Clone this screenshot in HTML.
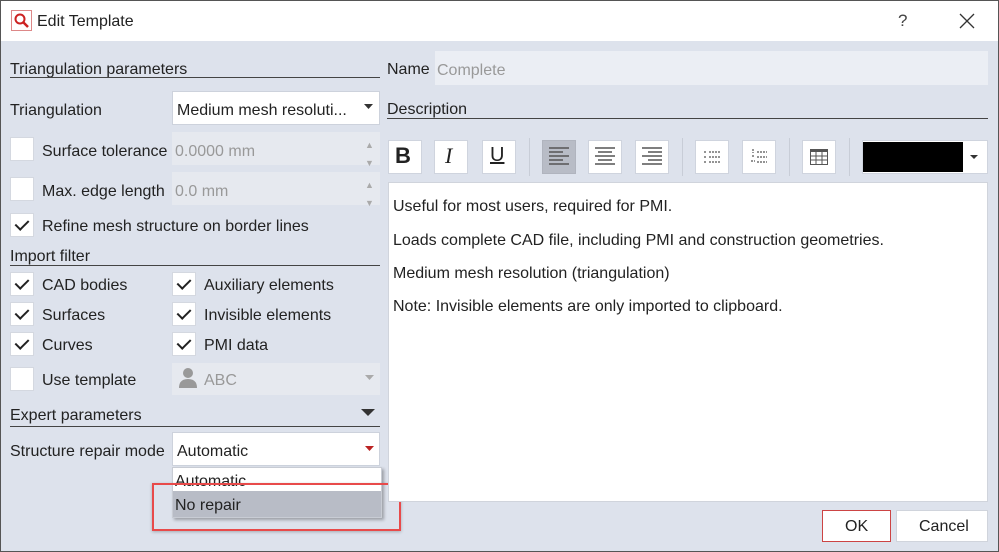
<!DOCTYPE html>
<html><head><style>
*{margin:0;padding:0;box-sizing:border-box}
body{width:999px;height:552px;overflow:hidden;background:#dde2ec;font-family:"Liberation Sans",sans-serif;font-size:16px;color:#222;position:relative}
.a{position:absolute}
.t{position:absolute;white-space:nowrap;line-height:18px;margin-top:2px}
.cb{position:absolute;width:24px;height:24px;background:#fff;border:1px solid #d4d8e0}
.ck::after{content:"";position:absolute;left:7px;top:3px;width:6px;height:11px;border:solid #222;border-width:0 2.5px 2.5px 0;transform:rotate(45deg)}
.box{position:absolute;background:#fff;border:1px solid #cdd2dc}
.dis{position:absolute;background:#e6e9ef}
.btn{position:absolute;top:140px;width:34px;height:34px;background:#fff;border:1px solid #cfd4de}
.sep{position:absolute;top:138px;width:1px;height:38px;background:#c8cdd7}
.ln{position:absolute;height:1px;background:#444}
</style></head><body>
<div class="a" style="left:0;top:0;width:999px;height:41px;background:#fff"></div>
<div class="a" style="left:0;top:0;width:999px;height:552px;border:1px solid #555;pointer-events:none;z-index:9"></div>
<div class="a" style="left:11px;top:10px;width:21px;height:21px;border:1px solid #d88"></div>
<svg class="a" style="left:13px;top:12px" width="17" height="17"><circle cx="7" cy="7" r="4.5" fill="none" stroke="#c22" stroke-width="2"/><line x1="10" y1="10" x2="15" y2="15" stroke="#c22" stroke-width="2.5"/></svg>
<div class="t" style="left:37px;top:11px;font-size:16px">Edit Template</div>
<div class="t" style="left:898px;top:10px;font-size:17px;color:#444">?</div>
<svg class="a" style="left:959px;top:13px" width="16" height="16"><path d="M1 1L15 15M15 1L1 15" stroke="#333" stroke-width="1.3"/></svg>

<div class="t" style="left:10px;top:59px">Triangulation parameters</div>
<div class="ln" style="left:10px;top:77px;width:370px"></div>
<div class="t" style="left:10px;top:100px">Triangulation</div>
<div class="box" style="left:172px;top:91px;width:208px;height:34px"></div>
<div class="t" style="left:177px;top:100px">Medium mesh resoluti...</div>
<svg class="a" style="left:364px;top:104px" width="9" height="6"><path d="M0 0H9L4.5 5z" fill="#333"/></svg>

<div class="cb" style="left:10px;top:137px"></div>
<div class="t" style="left:42px;top:141px">Surface tolerance</div>
<div class="dis" style="left:172px;top:132px;width:208px;height:33px"></div>
<div class="t" style="left:175px;top:141px;color:#999">0.0000 mm</div>
<div class="t" style="left:365px;top:134px;color:#aaa;font-size:9px">▲<br>▼</div>
<div class="cb" style="left:10px;top:177px"></div>
<div class="t" style="left:42px;top:181px">Max. edge length</div>
<div class="dis" style="left:172px;top:172px;width:208px;height:33px"></div>
<div class="t" style="left:175px;top:181px;color:#999">0.0 mm</div>
<div class="t" style="left:365px;top:174px;color:#aaa;font-size:9px">▲<br>▼</div>
<div class="cb ck" style="left:10px;top:213px"></div>
<div class="t" style="left:42px;top:216px">Refine mesh structure on border lines</div>

<div class="t" style="left:10px;top:246px">Import filter</div>
<div class="ln" style="left:10px;top:265px;width:370px"></div>
<div class="cb ck" style="left:10px;top:272px"></div><div class="t" style="left:42px;top:275px">CAD bodies</div>
<div class="cb ck" style="left:172px;top:272px"></div><div class="t" style="left:204px;top:275px">Auxiliary elements</div>
<div class="cb ck" style="left:10px;top:302px"></div><div class="t" style="left:42px;top:305px">Surfaces</div>
<div class="cb ck" style="left:172px;top:302px"></div><div class="t" style="left:204px;top:305px">Invisible elements</div>
<div class="cb ck" style="left:10px;top:332px"></div><div class="t" style="left:42px;top:335px">Curves</div>
<div class="cb ck" style="left:172px;top:332px"></div><div class="t" style="left:204px;top:335px">PMI data</div>
<div class="cb" style="left:10px;top:367px"></div><div class="t" style="left:42px;top:370px">Use template</div>
<div class="dis" style="left:172px;top:363px;width:208px;height:32px"></div>
<svg class="a" style="left:178px;top:367px" width="20" height="22"><circle cx="10" cy="6" r="5" fill="#999"/><path d="M1 21Q1 12 10 12Q19 12 19 21z" fill="#999"/></svg>
<div class="t" style="left:204px;top:370px;color:#999">ABC</div>
<svg class="a" style="left:365px;top:375px" width="9" height="6"><path d="M0 0H9L4.5 5z" fill="#aaa"/></svg>

<div class="t" style="left:10px;top:405px">Expert parameters</div>
<svg class="a" style="left:361px;top:409px" width="14" height="8"><path d="M0 0H14L7 7z" fill="#333"/></svg>
<div class="ln" style="left:10px;top:426px;width:370px"></div>
<div class="t" style="left:10px;top:441px">Structure repair mode</div>
<div class="box" style="left:172px;top:432px;width:208px;height:34px"></div>
<div class="t" style="left:177px;top:441px">Automatic</div>
<svg class="a" style="left:365px;top:446px" width="9" height="6"><path d="M0 0H9L4.5 5z" fill="#b22"/></svg>
<div class="a" style="left:172px;top:467px;width:210px;height:51px;background:#fff;border:1px solid #c8ccd4;box-shadow:2px 2px 3px rgba(0,0,0,.3)"></div>
<div class="a" style="left:173px;top:491px;width:208px;height:26px;background:#b8bcc6"></div>
<div class="t" style="left:175px;top:471px">Automatic</div>
<div class="t" style="left:175px;top:495px">No repair</div>
<div class="a" style="left:152px;top:483px;width:249px;height:48px;border:2px solid #e84a4a;box-shadow:0 1px 3px rgba(0,0,0,.25)"></div>

<div class="t" style="left:387px;top:59px">Name</div>
<div class="a" style="left:435px;top:51px;width:553px;height:34px;background:#ebeef4"></div>
<div class="t" style="left:437px;top:60px;color:#999">Complete</div>
<div class="t" style="left:387px;top:99px">Description</div>
<div class="ln" style="left:387px;top:118px;width:601px"></div>

<div class="btn" style="left:388px"></div><div class="t" style="left:395px;top:145px;font-size:22px;font-weight:bold">B</div>
<div class="btn" style="left:434px"></div><div class="t" style="left:445px;top:145px;font-size:22px;font-style:italic;font-family:'Liberation Serif',serif">I</div>
<div class="btn" style="left:482px"></div><div class="t" style="left:490px;top:144px;font-size:20px;text-decoration:underline">U</div>
<div class="sep" style="left:529px"></div>
<div class="btn" style="left:542px;background:#b8bcc6;border-color:#b0b4be"></div>
<svg class="a" style="left:549px;top:147px" width="20" height="20" stroke="#555" stroke-width="1.5"><path d="M0 1H20M0 5H14M0 9H20M0 13H14M0 17H20"/></svg>
<div class="btn" style="left:588px"></div>
<svg class="a" style="left:595px;top:147px" width="20" height="20" stroke="#555" stroke-width="1.5"><path d="M0 1H20M3 5H17M0 9H20M3 13H17M0 17H20"/></svg>
<div class="btn" style="left:635px"></div>
<svg class="a" style="left:642px;top:147px" width="20" height="20" stroke="#555" stroke-width="1.5"><path d="M0 1H20M6 5H20M0 9H20M6 13H20M0 17H20"/></svg>
<div class="sep" style="left:682px"></div>
<div class="btn" style="left:695px"></div>
<svg class="a" style="left:704px;top:150px" width="16" height="14" stroke="#555" stroke-width="1.2"><path d="M0 2H3M5 2H16M0 7H3M5 7H16M0 12H3M5 12H16" stroke-dasharray="2 1"/></svg>
<div class="btn" style="left:742px"></div>
<svg class="a" style="left:751px;top:149px" width="16" height="15" stroke="#555" stroke-width="1.2"><path d="M2 0V4M1 7H4M0 12H4M6 3H16M6 8H16M6 13H16" stroke-dasharray="2 1"/></svg>
<div class="sep" style="left:789px"></div>
<div class="btn" style="left:802px"></div>
<svg class="a" style="left:810px;top:149px" width="18" height="16"><rect x="0.5" y="0.5" width="17" height="15" fill="none" stroke="#555"/><rect x="0" y="0" width="18" height="3" fill="#555"/><path d="M1 7H17M1 11H17M6 3V15M12 3V15" stroke="#555"/></svg>
<div class="sep" style="left:849px"></div>
<div class="a" style="left:862px;top:140px;width:126px;height:34px;background:#fff;border:1px solid #cfd4de"></div>
<div class="a" style="left:863px;top:142px;width:100px;height:30px;background:#000"></div>
<svg class="a" style="left:970px;top:155px" width="8" height="5"><path d="M0 0H8L4 4z" fill="#333"/></svg>

<div class="a" style="left:388px;top:182px;width:600px;height:320px;background:#fff;border:1px solid #d0d4dc"></div>
<div class="t" style="left:393px;top:196px">Useful for most users, required for PMI.</div>
<div class="t" style="left:393px;top:230px">Loads complete CAD file, including PMI and construction geometries.</div>
<div class="t" style="left:393px;top:263px">Medium mesh resolution (triangulation)</div>
<div class="t" style="left:393px;top:296px">Note: Invisible elements are only imported to clipboard.</div>

<div class="a" style="left:822px;top:510px;width:69px;height:32px;background:#fff;border:1px solid #c44"></div>
<div class="t" style="left:845px;top:516px;font-size:16px">OK</div>
<div class="a" style="left:896px;top:510px;width:92px;height:32px;background:#fff;border:1px solid #d0d4dc"></div>
<div class="t" style="left:919px;top:516px;font-size:16px">Cancel</div>
</body></html>
